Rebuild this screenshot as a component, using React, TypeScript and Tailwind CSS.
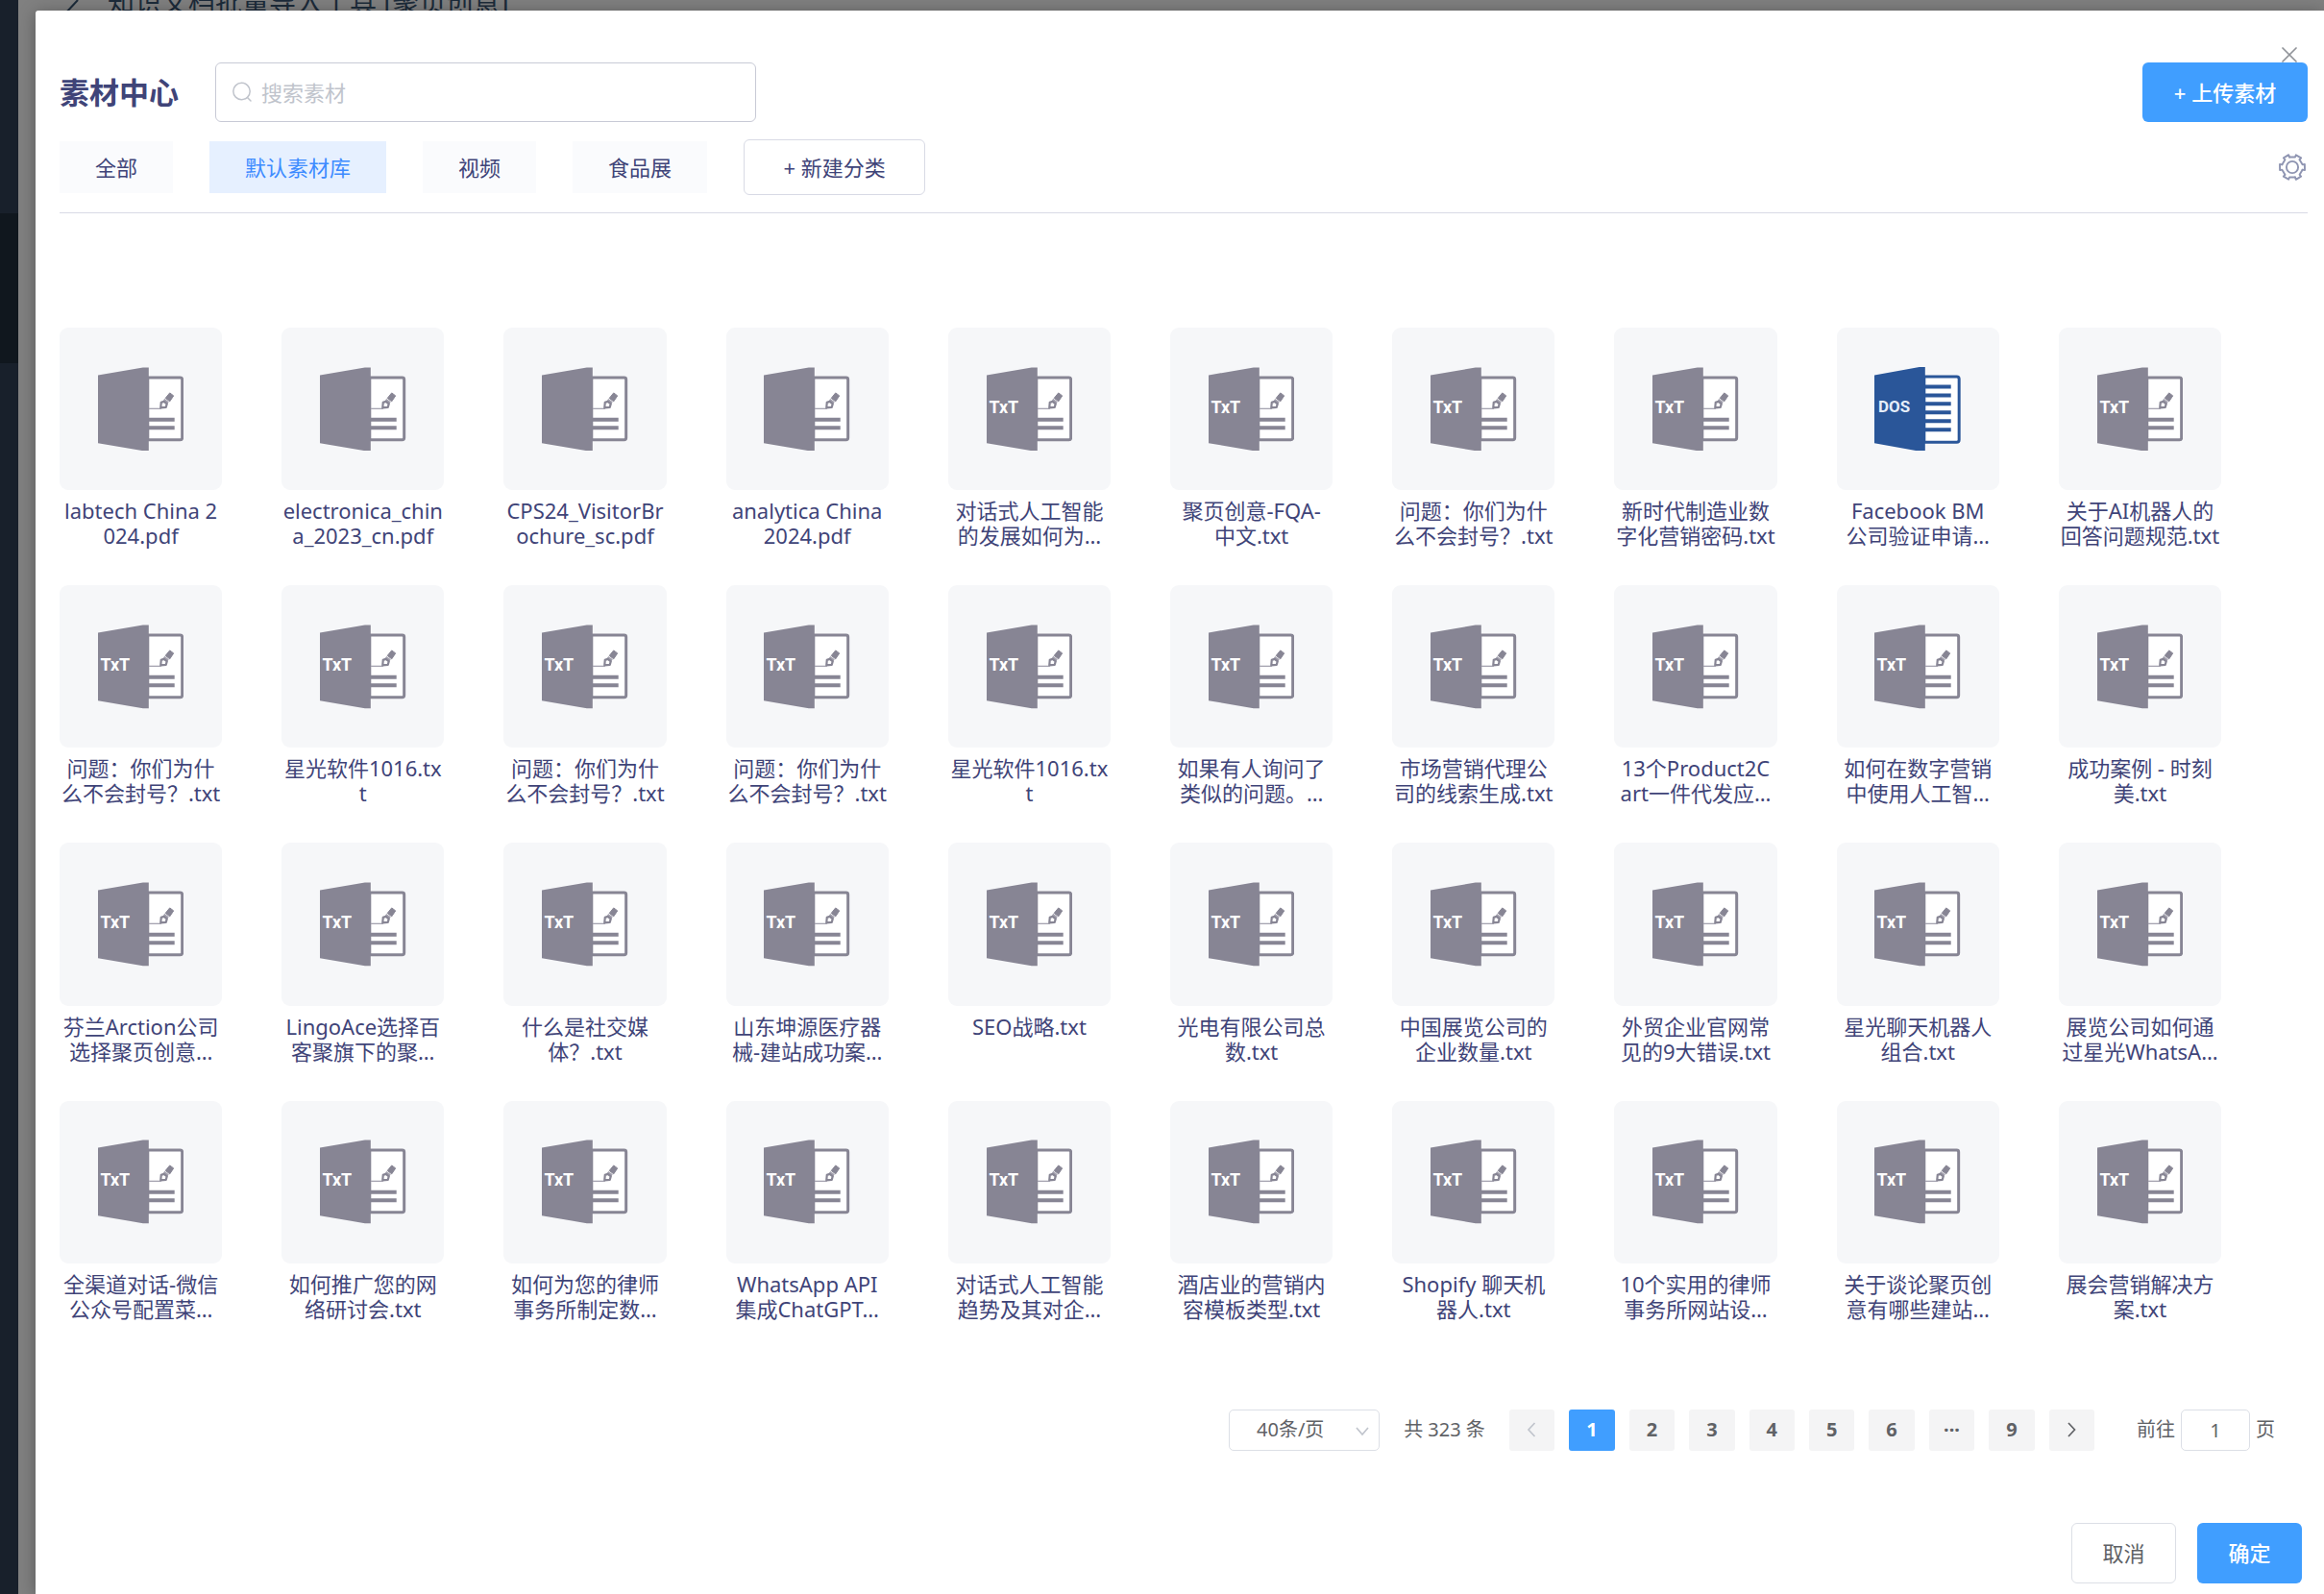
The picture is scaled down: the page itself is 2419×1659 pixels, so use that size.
import { X } from "lucide-react";

type FileKind = "pdf" | "txt" | "doc";

interface Material {
  kind: FileKind;
  lines: string[];
}

const txt = (...lines: string[]): Material => ({ kind: "txt", lines });
const pdf = (...lines: string[]): Material => ({ kind: "pdf", lines });
const doc = (...lines: string[]): Material => ({ kind: "doc", lines });

const materials: Material[] = [
  pdf("labtech China 2", "024.pdf"),
  pdf("electronica_chin", "a_2023_cn.pdf"),
  pdf("CPS24_VisitorBr", "ochure_sc.pdf"),
  pdf("analytica China", "2024.pdf"),
  txt("对话式人工智能", "的发展如何为…"),
  txt("聚页创意-FQA-", "中文.txt"),
  txt("问题：你们为什", "么不会封号？.txt"),
  txt("新时代制造业数", "字化营销密码.txt"),
  doc("Facebook BM", "公司验证申请…"),
  txt("关于AI机器人的", "回答问题规范.txt"),

  txt("问题：你们为什", "么不会封号？.txt"),
  txt("星光软件1016.tx", "t"),
  txt("问题：你们为什", "么不会封号？.txt"),
  txt("问题：你们为什", "么不会封号？.txt"),
  txt("星光软件1016.tx", "t"),
  txt("如果有人询问了", "类似的问题。…"),
  txt("市场营销代理公", "司的线索生成.txt"),
  txt("13个Product2C", "art一件代发应…"),
  txt("如何在数字营销", "中使用人工智…"),
  txt("成功案例 - 时刻", "美.txt"),

  txt("芬兰Arction公司", "选择聚页创意…"),
  txt("LingoAce选择百", "客聚旗下的聚…"),
  txt("什么是社交媒", "体？.txt"),
  txt("山东坤源医疗器", "械-建站成功案…"),
  txt("SEO战略.txt"),
  txt("光电有限公司总", "数.txt"),
  txt("中国展览公司的", "企业数量.txt"),
  txt("外贸企业官网常", "见的9大错误.txt"),
  txt("星光聊天机器人", "组合.txt"),
  txt("展览公司如何通", "过星光WhatsA…"),

  txt("全渠道对话-微信", "公众号配置菜…"),
  txt("如何推广您的网", "络研讨会.txt"),
  txt("如何为您的律师", "事务所制定数…"),
  txt("WhatsApp API", "集成ChatGPT…"),
  txt("对话式人工智能", "趋势及其对企…"),
  txt("酒店业的营销内", "容模板类型.txt"),
  txt("Shopify 聊天机", "器人.txt"),
  txt("10个实用的律师", "事务所网站设…"),
  txt("关于谈论聚页创", "意有哪些建站…"),
  txt("展会营销解决方", "案.txt"),
];

const tabs = ["全部", "默认素材库", "视频", "食品展"];
const pages = ["1", "2", "3", "4", "5", "6", "···", "9"];

function SearchIcon() {
  return (
    <svg viewBox="0 0 22 22" className="size-[22px]" fill="none" stroke="currentColor" strokeWidth="1.5">
      <circle cx="10.500" cy="10" r="8.700" />
      <path d="M16.500 16.500l3.500 3.500" strokeLinecap="round" />
    </svg>
  );
}

// one valley and one tooth, repeated around the centre
function GearIcon() {
  return (
    <svg viewBox="0 0 28 28" className="size-7" fill="none" stroke="currentColor" strokeWidth="1.9" strokeLinejoin="round" strokeLinecap="round">
      <circle cx="14" cy="14" r="6.100" />
      {[0, 60, 120, 180, 240, 300].map((deg) => (
        <path key={deg} d="M11 3.500H17L17.800 1.300L23.200 4.300L21.600 6.150" transform={`rotate(${deg} 14 14)`} />
      ))}
    </svg>
  );
}

function Chevron({ d }: { d: string }) {
  return (
    <svg viewBox="0 0 20 20" className="size-5" fill="none" stroke="currentColor" strokeWidth="1.7">
      <path d={d} />
    </svg>
  );
}

function FileIcon({ kind }: { kind: FileKind }) {
  if (kind === "doc") {
    return (
      <svg viewBox="0 0 90 88" className="w-[53%]">
        <path d="M52 10h34q2.500 0 2.500 2.500v63.500q0 2.500-2.500 2.500H52z" fill="#fff" stroke="#2a5699" strokeWidth="3" />
        <path d="M53 20.500h27M53 29.500h27M53 38.500h27M53 47.500h27M53 56.500h27M53 65.500h27" stroke="#2a5699" strokeWidth="4" />
        <path d="M0 8.500L47 0h6v88h-6L0 79.500z" fill="#2a5699" />
        <text x="4" y="47" fontSize="17" fontWeight="700" fill="#e6eefa" fontFamily="Roboto, sans-serif">DOS</text>
      </svg>
    );
  }
  return (
    <svg viewBox="0 0 90 88" className="w-[53%]">
      <path d="M52 11h34q2 0 2 2v61q0 2-2 2H52z" fill="#fff" stroke="#878594" strokeWidth="3" />
      <path d="M53 55h27M53 63.500h27" stroke="#878594" strokeWidth="4" />
      <path d="M53 43.500h13" stroke="#a5a3b0" strokeWidth="1.300" />
      <path d="M75 27l4 3-4 6-4.500-3.500z" fill="#878594" stroke="#878594" strokeWidth="1" strokeLinejoin="round" />
      <path d="M69.500 33l4.500 3.500-1.500 2.500-4.500-3.500z" fill="#a5a3b0" />
      <path d="M65.500 42.500l.5-5.500 3-1 3 2.500-1 3.500z" fill="#fff" stroke="#878594" strokeWidth="2.200" strokeLinejoin="round" />
      <path d="M0 8.500L47 0.500h6v87h-6L0 79.500z" fill="#878594" />
      {kind === "txt" && (
        <text x="2.500" y="48.500" fontSize="18" fontWeight="700" fill="#fff" fontFamily="'Liberation Sans Narrow', Roboto, sans-serif">TxT</text>
      )}
    </svg>
  );
}

function MaterialCard({ item }: { item: Material }) {
  return (
    <button className="flex flex-col gap-2 text-[22px] leading-[26px]">
      <span className="flex aspect-square w-full items-center justify-center rounded-[9px] bg-[#f6f7f9]">
        <FileIcon kind={item.kind} />
      </span>
      <span className="w-full text-center">
        {item.lines.map((line) => (
          <span key={line} className="block whitespace-nowrap">{line}</span>
        ))}
      </span>
    </button>
  );
}

function Pagination() {
  return (
    <div className="flex items-center justify-end pr-[34px] text-xl text-[#606266]">
      <label className="relative flex">
        <select
          aria-label="每页条数"
          className="h-[43px] w-[157px] appearance-none rounded-[5px] border border-[#dcdfe6] bg-white pl-7"
        >
          <option>40条/页</option>
        </select>
        <span className="pointer-events-none absolute top-3 right-2 text-[#c0c4cc]">
          <Chevron d="M4 7l6 7 6-7" />
        </span>
      </label>
      <span className="w-[135px] text-center">共 323 条</span>
      <div className="grid w-[609px] grid-cols-10 gap-[15px] font-bold">
        <button aria-label="上一页" disabled className="flex h-[43px] items-center justify-center rounded-[3px] bg-[#f4f4f5] text-[#c0c4cc]">
          <Chevron d="M12.500 3L6 10l6.500 7" />
        </button>
        {pages.map((page) => (
          <button
            key={page}
            className={`h-[43px] rounded-[3px] ${page === "1" ? "bg-[#409eff] text-white" : "bg-[#f4f4f5]"}`}
          >
            {page}
          </button>
        ))}
        <button aria-label="下一页" className="flex h-[43px] items-center justify-center rounded-[3px] bg-[#f4f4f5]">
          <Chevron d="M7 3l6.500 7L7 17" />
        </button>
      </div>
      <label className="ml-11 flex items-center gap-[6px]">
        前往
        <input defaultValue="1" className="h-[43px] w-[72px] rounded-[5px] border border-[#dcdfe6] text-center" />
        页
      </label>
    </div>
  );
}

export default function App() {
  return (
    <div className="relative flex min-h-screen bg-[#808080] font-['Noto_Sans','Noto_Sans_CJK_SC',sans-serif] text-[22px] text-[#3f4478]">
      <aside className="w-[19px] shrink-0 bg-[#18202b] pt-[222px]">
        <div className="h-[156px] bg-[#10171e]" />
      </aside>

      <div className="absolute -top-[14px] left-[66px] flex items-center gap-[26px] text-[28px] leading-8 text-[#1c2b3a]">
        <svg viewBox="0 0 20 28" className="h-7 w-5 shrink-0" fill="none" stroke="currentColor" strokeWidth="2">
          <path d="M15 12L2 26" />
        </svg>
        <span>知识文档批量导入工具 [聚页创意]</span>
      </div>

      <main role="dialog" aria-label="素材中心" className="relative mt-[11px] ml-[18px] min-w-0 flex-1 rounded-tl-[3px] bg-white pt-[54px] pr-[17px] pl-[25px] shadow-[0_2px_18px_rgba(0,0,0,0.3)]">
        <button aria-label="关闭" className="absolute top-8 right-[22px] text-[#909399]">
          <X className="size-7" strokeWidth={1.5} />
        </button>

        <header className="flex items-center">
          <h1 className="text-[31px] font-bold">素材中心</h1>
          <label className="ml-[38px] flex h-[62px] w-[563px] items-center gap-[9px] rounded-md border border-[#c8cad6] px-4 text-[#c0c4cc]">
            <SearchIcon />
            <input placeholder="搜索素材" aria-label="搜索素材" className="min-w-0 flex-1 outline-none placeholder:text-[#c0c4cc]" />
          </label>
          <button className="relative ml-auto h-[62px] w-[172px] rounded-md bg-[#409eff] font-medium text-white">+ 上传素材</button>
        </header>

        <nav className="mt-[18px] flex items-center gap-[38px] border-b border-[#d8dae5] pb-[18px]">
          {tabs.map((tab) => (
            <button
              key={tab}
              className={`h-[54px] px-[37px] ${tab === "默认素材库" ? "bg-[#e6f0ff] text-[#3d8bff]" : "bg-[#fafbfd]"}`}
            >
              {tab}
            </button>
          ))}
          <button className="h-[58px] w-[189px] rounded-md border border-[#d8dae5]">+ 新建分类</button>
          <button aria-label="设置" className="mr-[2px] ml-auto text-[#8f95b2]">
            <GearIcon />
          </button>
        </nav>

        <section className="mt-[119px] grid grid-cols-10 gap-x-[62px] gap-y-[39px] pr-[90px]">
          {materials.map((item, i) => (
            <MaterialCard key={i} item={item} />
          ))}
        </section>

        <div className="mt-[92px]">
          <Pagination />
        </div>

        <footer className="mt-[75px] flex justify-end gap-[22px] pr-[6px] pb-[11px]">
          <button className="h-[63px] w-[109px] rounded-md border border-[#dcdfe6] text-[#606266]">取消</button>
          <button className="h-[63px] w-[109px] rounded-md bg-[#409eff] font-medium text-white">确定</button>
        </footer>
      </main>
    </div>
  );
}
